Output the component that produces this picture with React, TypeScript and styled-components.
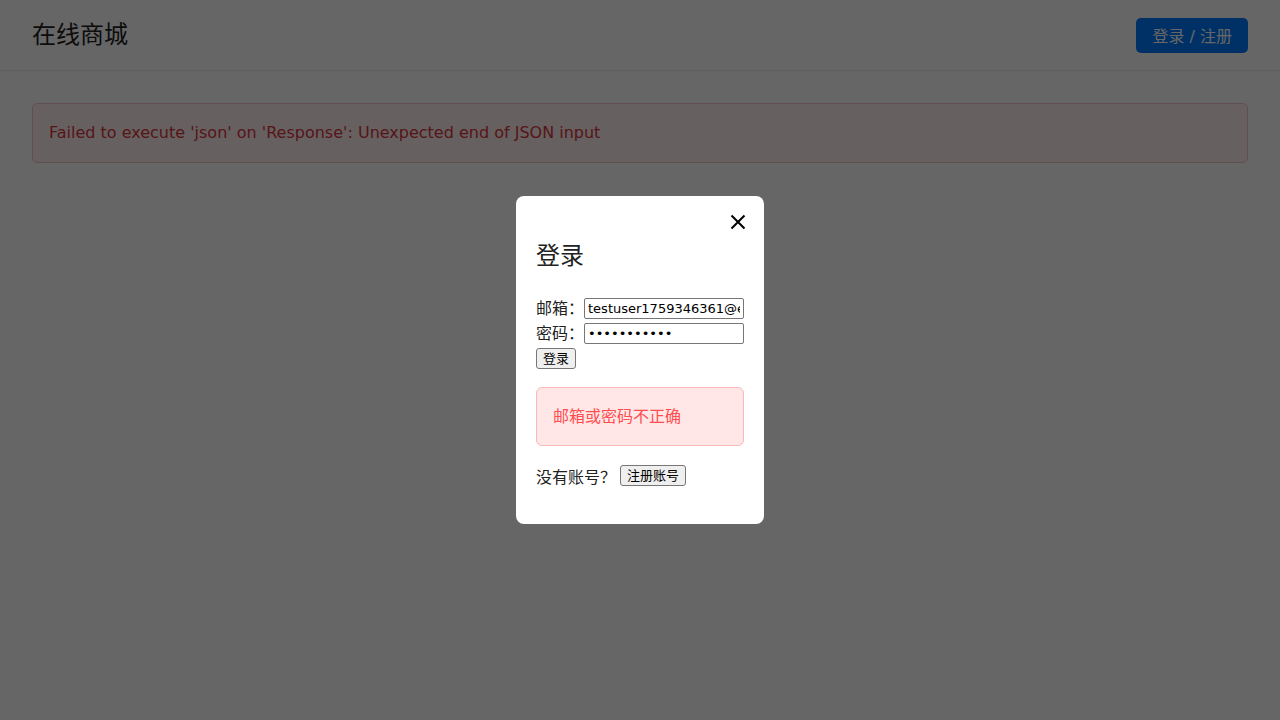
import React from "react";
import styled, { createGlobalStyle } from "styled-components";

const GlobalStyle = createGlobalStyle`
  html, body { margin: 0; padding: 0; background: #ffffff; }
  body {
    font-family: "DejaVu Sans", "Noto Sans CJK SC", sans-serif;
    color: #333;
    width: 1280px;
    height: 720px;
    overflow: hidden;
  }
  * { box-sizing: border-box; }
`;

const Page = styled.div`
  position: relative;
  width: 1280px;
  height: 720px;
  background: #ffffff;
`;

const Header = styled.header`
  height: 71px;
  padding: 0 32px;
  display: flex;
  align-items: center;
  justify-content: space-between;
  border-bottom: 1px solid #ececec;
  box-shadow: 0 1px 3px rgba(0, 0, 0, 0.04);
`;

const Brand = styled.h1`
  margin: 0;
  font-size: 24px;
  font-weight: 400;
  line-height: 28px;
  color: #222;
`;

const AuthButton = styled.button`
  height: 35px;
  padding: 0 16px;
  border: none;
  border-radius: 5px;
  background: #007bff;
  color: #ffffff;
  font-family: inherit;
  font-size: 16px;
  cursor: pointer;
`;

const Main = styled.main`
  padding: 32px;
`;

const Banner = styled.div`
  padding: 16px;
  line-height: 26px;
  font-size: 16px;
  color: #d9363e;
  background: #fff0f0;
  border: 1px solid #f3c4c8;
  border-radius: 5px;
`;

const Overlay = styled.div`
  position: absolute;
  inset: 0;
  background: rgba(0, 0, 0, 0.6);
  display: flex;
  align-items: center;
  justify-content: center;
`;

const Modal = styled.div`
  position: relative;
  width: 248px;
  padding: 20px 20px 38px;
  background: #ffffff;
  border-radius: 8px;
  display: flex;
  flex-direction: column;
`;

const CloseButton = styled.button`
  position: absolute;
  top: 16px;
  right: 16px;
  width: 20px;
  height: 20px;
  padding: 0;
  border: none;
  background: transparent;
  display: flex;
  align-items: center;
  justify-content: center;
  cursor: pointer;
`;

const Title = styled.h2`
  margin: 26px 0 28px;
  font-size: 24px;
  font-weight: 400;
  line-height: 28px;
  color: #222;
`;

const Form = styled.form`
  display: flex;
  flex-direction: column;
  align-items: flex-start;
  gap: 4px;
`;

const Row = styled.label`
  display: flex;
  align-items: center;
  width: 100%;
  height: 21px;
  font-size: 16px;
  line-height: 21px;
  color: #222;
  white-space: nowrap;
`;

const Input = styled.input`
  flex: 1;
  min-width: 0;
  height: 21px;
  padding: 1px 3px;
  font-family: "DejaVu Sans", "Noto Sans CJK SC", sans-serif;
  font-size: 13px;
  color: #000;
  border: 1px solid #767676;
  border-radius: 2px;
  background: #fff;
`;

const NativeButton = styled.button`
  height: 21px;
  padding: 0 6px;
  font-family: "DejaVu Sans", "Noto Sans CJK SC", sans-serif;
  font-size: 13px;
  line-height: 19px;
  color: #000;
  background: #efefef;
  border: 1px solid #767676;
  border-radius: 3px;
  cursor: pointer;
`;

const ErrorBox = styled.div`
  margin: 18px 0 19px;
  padding: 16px;
  font-size: 16px;
  line-height: 25px;
  color: #ff4d4f;
  background: #ffe7e7;
  border: 1px solid #ffb8b8;
  border-radius: 6px;
`;

const Footer = styled.div`
  display: flex;
  align-items: center;
  gap: 4px;
  height: 21px;
  font-size: 16px;
  color: #222;
`;

export default function App() {
  return (
    <>
      <GlobalStyle />
      <Page>
        <Header>
          <Brand>在线商城</Brand>
          <AuthButton>登录 / 注册</AuthButton>
        </Header>
        <Main>
          <Banner>Failed to execute 'json' on 'Response': Unexpected end of JSON input</Banner>
        </Main>
        <Overlay>
          <Modal>
            <CloseButton aria-label="关闭">
              <svg width="18" height="18" viewBox="0 0 18 18">
                <path d="M2.5 2.5 L15.5 15.5 M15.5 2.5 L2.5 15.5" stroke="#000" strokeWidth="2" fill="none" />
              </svg>
            </CloseButton>
            <Title>登录</Title>
            <Form onSubmit={(e) => e.preventDefault()}>
              <Row>
                邮箱：
                <Input type="email" defaultValue="testuser1759346361@example.com" />
              </Row>
              <Row>
                密码：
                <Input type="password" defaultValue="password123" />
              </Row>
              <NativeButton type="submit">登录</NativeButton>
            </Form>
            <ErrorBox>邮箱或密码不正确</ErrorBox>
            <Footer>
              没有账号？
              <NativeButton type="button">注册账号</NativeButton>
            </Footer>
          </Modal>
        </Overlay>
      </Page>
    </>
  );
}
